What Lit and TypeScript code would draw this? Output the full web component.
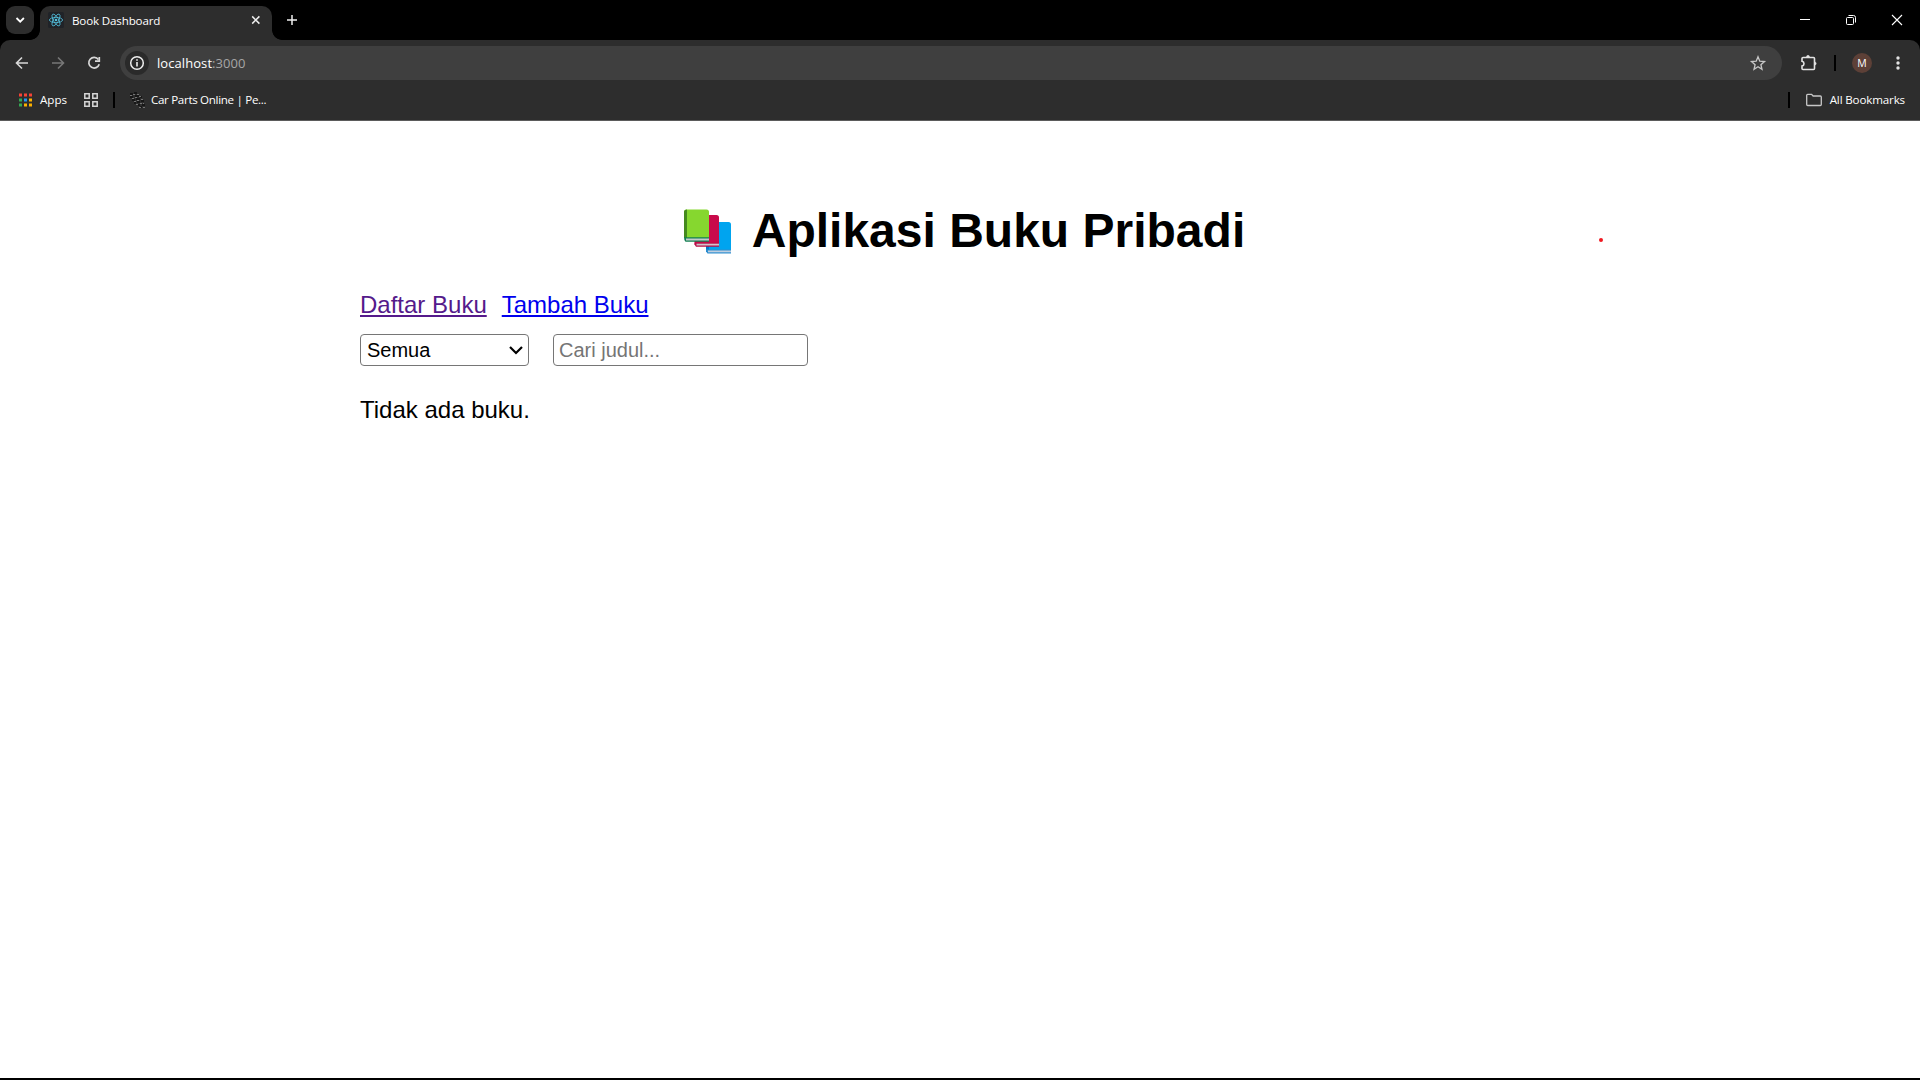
import { LitElement, html, css, svg } from "lit";
import { customElement } from "lit/decorators.js";

const appColors = ["#f44336", "#f44336", "#f44336", "#34a853", "#2196f3", "#fbb000", "#34a853", "#fbb000", "#fbb000"];

@customElement("browser-chrome")
class BrowserChrome extends LitElement {
  static styles = css`
    :host { display: block; height: 121px; background: #000; color: #fff; font: 12px/16px "Open Sans", "Noto Sans", sans-serif; }
    svg { display: block; flex: none; }
    .strip { display: flex; height: 40px; }
    .search { width: 28px; height: 28px; margin: 6px 6px 0; border-radius: 9px; background: #2d2d2d; flex: none; }
    .tab { position: relative; display: flex; box-sizing: border-box; width: 232px; height: 34px; margin-top: 6px; padding: 6px 8px 0; border-radius: 10px 10px 0 0; background: #2d2d2d; }
    .tab::before, .tab::after { content: ""; position: absolute; bottom: 0; width: 10px; height: 10px; }
    .tab::before { left: -10px; background: radial-gradient(circle at 0 0, transparent 9.5px, #2d2d2d 10.2px); }
    .tab::after { right: -10px; background: radial-gradient(circle at 100% 0, transparent 9.5px, #2d2d2d 10.2px); }
    .tab-title { width: 175px; margin: 0 0 0 8px; font-size: 11.6px; line-height: 17px; letter-spacing: -0.15px; }
    .plus { margin: 12px 0 0 12px; }
    .window { display: flex; margin-left: auto; }
    .window svg { width: 46px; height: 40px; }
    .panel { box-sizing: border-box; height: 81px; border-radius: 10px 10px 0 0; background: #2d2d2d; border-bottom: 1px solid #5b5b5b; }
    .toolbar { display: flex; align-items: center; height: 46px; }
    .nav { display: flex; padding-left: 12px; width: 120px; box-sizing: border-box; gap: 16px; flex: none; }
    .omni { display: flex; align-items: center; width: 1662px; height: 34px; border-radius: 17px; background: #3f3f3f; box-sizing: border-box; padding: 0 14px 0 5px; flex: none; }
    .url { margin-left: 8px; font-size: 13px; letter-spacing: 0.07px; flex: 1; }
    .port { color: #a6a6a6; }
    .tools { display: flex; align-items: center; padding-left: 16px; }
    .bar { width: 2px; height: 16px; background: #000; flex: none; }
    .tools .bar { margin-left: 16px; }
    .avatar { width: 20px; height: 20px; border-radius: 50%; background: #5d4037; font-size: 10.5px; line-height: 20px; text-align: center; margin: 0 18px 0 16px; }
    .marks { display: flex; align-items: center; height: 28px; padding: 0 15px 0 19px; font-size: 11.6px; }
    .apps { margin: 0 16px 0 8px; width: 28px; }
    .site { margin-left: 6px; letter-spacing: -0.32px; }
    .all { margin-left: 8px; letter-spacing: -0.15px; }
    .push { margin-left: auto; }
    .marks .first { margin: 0 14px 0 15px; }
    .folder { margin-left: 16px; }
  `;

  render() {
    return html`
      <div class="strip">
        <div class="search">
          <svg width="28" height="28" fill="none" stroke="#fff" stroke-width="1.8"><path d="m10.5 12 3.7 3.7 3.7-3.7"/></svg>
        </div>
        <div class="tab">
          <svg width="16" height="16" viewBox="0 0 16 16">
            <rect width="16" height="16" rx="1.5" fill="#202328"/>
            <g fill="none" stroke="#53c1de" stroke-width=".8">
              <ellipse cx="8" cy="8" rx="6.6" ry="2.6"/>
              <ellipse cx="8" cy="8" rx="6.6" ry="2.6" transform="rotate(60 8 8)"/>
              <ellipse cx="8" cy="8" rx="6.6" ry="2.6" transform="rotate(120 8 8)"/>
            </g>
            <circle cx="8" cy="8" r="1.3" fill="#53c1de"/>
          </svg>
          <div class="tab-title">Book Dashboard</div>
          <svg width="16" height="16" stroke="#eee" stroke-width="1.5"><path d="m5.200 4.400 7.200 7.200M12.400 4.400 5.200 11.600"/></svg>
        </div>
        <svg class="plus" width="16" height="16" stroke="#eee" stroke-width="1.5"><path d="M8 3v10M3 8h10"/></svg>
        <div class="window">
          <svg stroke="#fff"><path d="M18 19.500h10"/></svg>
          <svg fill="none" stroke="#fff"><rect x="18.500" y="17.500" width="7" height="7" rx="1"/><path d="M20.500 15.500h5q2 0 2 2v5"/></svg>
          <svg stroke="#fff" stroke-width="1.100"><path d="m18 15 10 10M28 15l-10 10"/></svg>
        </div>
      </div>
      <div class="panel">
        <div class="toolbar">
          <div class="nav">
            <svg width="20" height="20" fill="none" stroke="#d8d8d8" stroke-width="1.600"><path d="M16 10H5M10 4.500 4.500 10l5.500 5.500"/></svg>
            <svg width="20" height="20" fill="none" stroke="#777" stroke-width="1.600"><path d="M4 10h11M10 4.500l5.500 5.500-5.500 5.500"/></svg>
            <svg width="20" height="20" fill="none" stroke="#d8d8d8" stroke-width="1.700"><path d="M14.400 6.600A5.300 5.300 0 1 0 15.200 11.200"/><path d="M15.300 4v4.200h-4.300"/></svg>
          </div>
          <div class="omni">
            <svg width="24" height="24" fill="none" stroke="#eee"><circle cx="12" cy="12" r="12" fill="#2a2a2a" stroke="none"/><circle cx="12" cy="12" r="6.300" stroke-width="1.500"/><path d="M12 11v4.500M12 8.200v1.600" stroke-width="1.600"/></svg>
            <span class="url">localhost<span class="port">:3000</span></span>
            <svg width="20" height="20" viewBox="0 0 20 20" fill="none" stroke="#c7c7c7" stroke-width="1.300"><path d="m10 3.800 1.800 4.400 4.700.4-3.600 3.100 1.100 4.600-4-2.500-4 2.500 1.100-4.600-3.600-3.100 4.700-.4z"/></svg>
          </div>
          <div class="tools">
            <svg width="20" height="20" viewBox="0 0 20 20" fill="none" stroke="#e3e3e3" stroke-width="1.600"><path d="M4 5.500Q4 4.500 5 4.500h10.500q1 0 1 1v10q0 1-1 1H5q-1 0-1-1V13q2-.4 2-2.300T4 8.300z"/><path d="M8.500 4Q8.500 2.300 10 2.300T11.500 4zM16.700 9q1.500 0 1.500 1.500T16.700 12z" fill="#e3e3e3" stroke-width=".5"/></svg>
            <div class="bar"></div>
            <div class="avatar">M</div>
            <svg width="16" height="20" fill="#e3e3e3"><circle cx="8" cy="5" r="1.700"/><circle cx="8" cy="10" r="1.700"/><circle cx="8" cy="15" r="1.700"/></svg>
          </div>
        </div>
        <div class="marks">
          <svg width="13" height="14">${appColors.map((c, i) => svg`<rect x=${(i % 3) * 5} y=${Math.floor(i / 3) * 5 + 0.5} width="3" height="3" fill=${c}/>`)}</svg>
          <span class="apps">Apps</span>
          <svg width="14" height="14" fill="none" stroke="#d5d5d5" stroke-width="1.500"><path d="M.8.8h4.400v4.400H.8zM8.800.8h4.400v4.400H8.800zM.8 8.800h4.400v4.400H.8zM8.800 8.800h4.400v4.400H8.800z"/></svg>
          <div class="bar first"></div>
          <svg width="16" height="16" viewBox="0 0 16 16" fill="none">
            <path d="M1 2h3M5 1h3M1 5h3M6 4h4M3 8h3M7 7h4M11 5h2M5 11h2M8 10h3M12 9h3M9 13h2M13 13h3M11 15h2" stroke="#101010" stroke-width="1.600"/>
            <path d="M1 3.500h2M4 2.500h2M8 2.500h2M3 6.500h2M6 5.500h2M10 4.500h2M5 9.500h2M8 8.500h2M12 7.500h2M7 12.500h2M11 11.500h2M14 11.500h1M10 15.500h2M14 15.500h2" stroke="#747474" stroke-width="1"/>
          </svg>
          <span class="site">Car Parts Online | Pe...</span>
          <div class="bar push"></div>
          <svg class="folder" width="16" height="14" fill="none" stroke="#c7c7c7" stroke-width="1.300"><path d="M.7 11.500V2.200q0-.9.900-.9h4l1.500 1.700h7.200q1 0 1 1v7.500q0 1-1 1H1.700q-1 0-1-1z"/></svg>
          <span class="all">All Bookmarks</span>
        </div>
      </div>`;
  }
}

@customElement("app-root")
class AppRoot extends LitElement {
  static styles = css`
    :host { display: flex; flex-direction: column; position: relative; box-sizing: border-box; width: 1920px; height: 1080px; overflow: hidden; background: #fff; border-bottom: 2px solid #000; color: #000; font: 24px/27px "Liberation Sans", Arial, sans-serif; }
    main { width: 1200px; margin: 0 auto; padding-top: 82px; }
    h1 { display: flex; justify-content: center; margin: 0 0 33px; font-size: 48px; line-height: 55px; padding-left: 8px; }
    .books { width: 50px; height: 48px; margin: 6px 19px 0 0; }
    nav { display: flex; gap: 15px; margin-bottom: 16px; }
    a { color: #0000ee; text-decoration: underline; }
    .seen { color: #551a8b; }
    .filters { display: flex; gap: 24px; }
    select, input { box-sizing: border-box; height: 32px; margin: 0; font: 20px "Liberation Sans", Arial, sans-serif; border: 1px solid #767676; border-radius: 4px; background: #fff; color: #000; outline: none; }
    .pick { position: relative; display: flex; }
    select { width: 169px; padding: 0 6px; appearance: none; }
    .pick svg { position: absolute; right: 5px; top: 8px; pointer-events: none; }
    input { width: 255px; padding: 1px 5px; }
    input::placeholder { color: #757575; }
    p { margin: 30px 0 0; }
    .dot { position: absolute; left: 1599px; top: 238px; width: 4px; height: 4px; border-radius: 2px; background: #f01820; }
  `;

  render() {
    return html`
      <browser-chrome></browser-chrome>
      <main>
        <h1>
          <svg class="books" viewBox="0 0 50 48">
            <path d="M23 13h22.500q2.500 0 2.500 2.500V42H23z" fill="#00a4ef"/><path d="M23 13h3v30h-3z" fill="#0078c8"/>
            <path d="M23 40.500h25v4H24.500q-1.500-1.500-1.500-4z" fill="#2f8fd0"/><path d="M25 41.500h23v1.800H25z" fill="#c0cfe0"/>
            <path d="M11.500 6h22Q36 6 36 8.500V36H11.500z" fill="#c90b4b"/><path d="M11.500 33.700H36v4H13q-1.500-1.500-1.500-4z" fill="#b80c45"/><path d="M13.500 34.700H36v1.800H13.500z" fill="#d0c4cc"/>
            <path d="M1 3q0-2.500 2.500-2.500h20Q26 .5 26 3v26H1z" fill="#86d72f"/><path d="M1 3Q1 .5 4 .5V29H1z" fill="#44891e"/>
            <path d="M1 28.300h25v4.400H2.500Q1 31.500 1 28.300z" fill="#128052"/><path d="M3 29.500h23v2H3z" fill="#c3cbca"/>
          </svg>
          <span>Aplikasi Buku Pribadi</span>
        </h1>
        <nav><a class="seen" href="#daftar">Daftar Buku</a><a href="#tambah">Tambah Buku</a></nav>
        <div class="filters">
          <div class="pick">
            <select><option>Semua</option></select>
            <svg width="16" height="16" fill="none" stroke="#000" stroke-width="2.200"><path d="m2 5 6 6 6-6"/></svg>
          </div>
          <input placeholder="Cari judul..." />
        </div>
        <p>Tidak ada buku.</p>
      </main>
      <div class="dot"></div>`;
  }
}
